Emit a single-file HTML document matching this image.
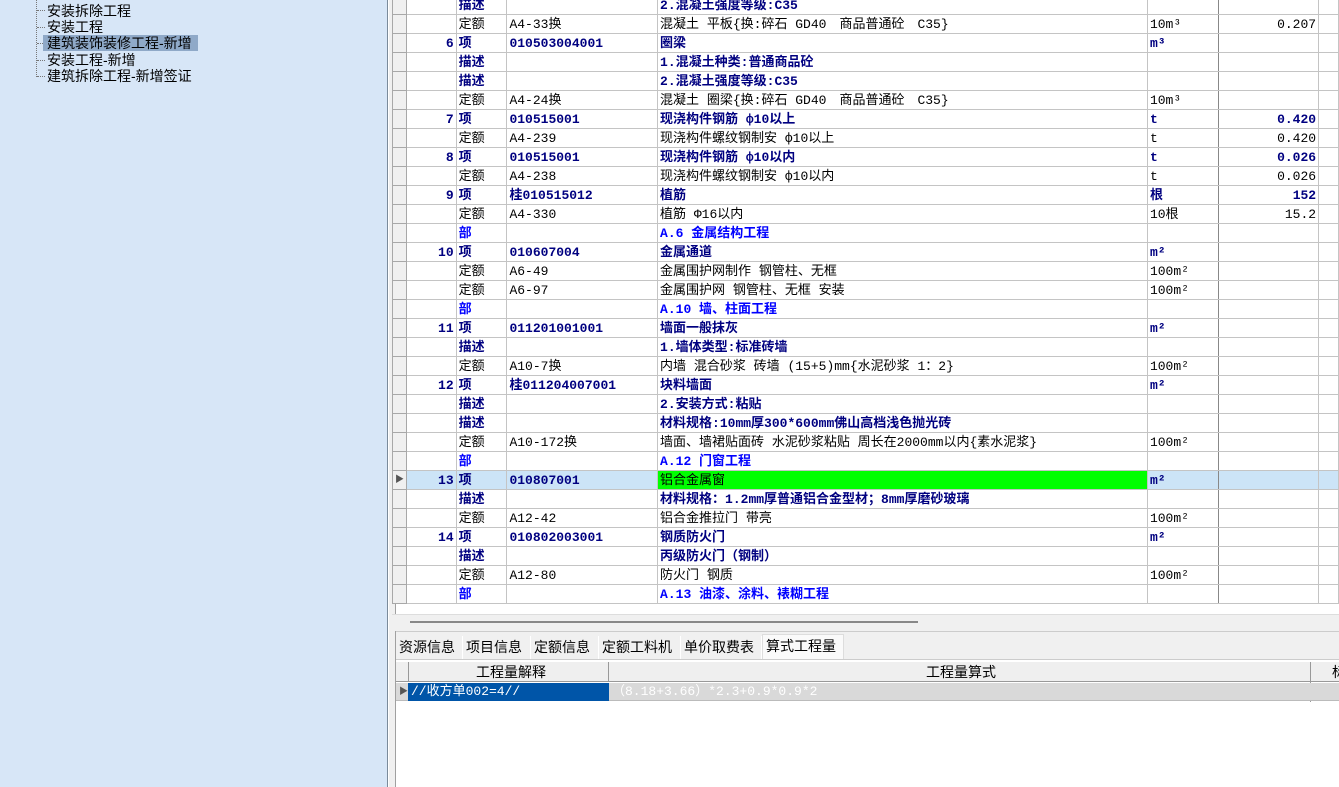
<!DOCTYPE html>
<html><head><meta charset="utf-8"><style>
*{margin:0;padding:0;box-sizing:border-box}
body{width:1339px;height:787px;overflow:hidden;background:#fff;font-family:"Liberation Sans","Noto Sans CJK SC",sans-serif;font-size:13px;position:relative}
#left{position:absolute;left:0;top:0;width:388px;height:787px;background:#d7e6f7;border-right:1px solid #7a8a9a}
.tn{position:absolute;left:47px;font-size:14px;color:#000;line-height:16px;white-space:nowrap}
.dot{position:absolute;border-top:1px dotted #777;width:8px;left:37px}
#sp{position:absolute;left:389px;top:0;width:7px;height:787px;background:#f0f0f0;border-right:1px solid #a0a0a0}
#grid{position:absolute;left:392px;top:-5px;border-collapse:collapse;table-layout:fixed}
#grid td{height:19px;border:1px solid #c4c4c4;padding:0 2px;white-space:nowrap;overflow:hidden;line-height:17px;font-size:13px;font-family:"Liberation Mono","Noto Sans CJK SC",monospace}
#grid td.h{background:#f0f0f0;border-color:#a8a8a8;padding:0}
#grid td.n{text-align:right;font-weight:bold;color:#000080}
#grid td.q{text-align:right}
#grid td.u{border-right:1px solid #888}
.b td{color:#000080;font-weight:bold}
.p td{color:#0000ff;font-weight:bold}
.sel td{background:#cce4f7}
#hsb{position:absolute;left:392px;top:614px;width:947px;height:17px;background:#f0f0f0;border-top:1px solid #ddd}
#tabs{position:absolute;left:396px;top:631px;width:943px;height:28px;background:#f0f0f0;border-top:1px solid #ccc}
.tab{position:absolute;top:4px;height:23px;font-size:14px;line-height:22px;padding-left:3px;background:#f0f0f0;border-right:1px solid #fff}
#bot{position:absolute;left:396px;top:659px;width:943px;height:128px;background:#fff;border-top:1px solid #ccc}
.mono{font-family:"Liberation Mono","Noto Sans CJK SC",monospace}
</style></head><body>
<div id="left">
<div class="dot" style="top:10px"></div><div class="tn" style="top:3px">安装拆除工程</div>
<div class="dot" style="top:27px"></div><div class="tn" style="top:19px">安装工程</div>
<div style="position:absolute;left:43px;top:35px;width:155px;height:16px;background:#8fa9c8"></div>
<div class="dot" style="top:43px;left:37px;width:6px"></div><div class="tn" style="top:35px">建筑装饰装修工程-新增</div>
<div class="dot" style="top:60px"></div><div class="tn" style="top:52px">安装工程-新增</div>
<div class="dot" style="top:76px"></div><div class="tn" style="top:68px">建筑拆除工程-新增签证</div>
<div style="position:absolute;left:36px;top:0;height:77px;border-left:1px dotted #777"></div>
</div>
<div id="sp"></div>
<table id="grid">
<colgroup><col style="width:14px"><col style="width:50px"><col style="width:51px"><col style="width:151px"><col style="width:491px"><col style="width:71px"><col style="width:101px"><col style="width:20px"></colgroup>
<tr class="b"><td class="h"></td><td></td><td>描述</td><td></td><td>2.混凝土强度等级:C35</td><td class="u"></td><td></td><td></td></tr>
<tr><td class="h"></td><td></td><td>定额</td><td>A4-33换</td><td>混凝土 平板{换:碎石 GD40　商品普通砼　C35}</td><td class="u">10m³</td><td class="q">0.207</td><td></td></tr>
<tr class="b"><td class="h"></td><td class="n">6</td><td>项</td><td>010503004001</td><td>圈梁</td><td class="u">m³</td><td></td><td></td></tr>
<tr class="b"><td class="h"></td><td></td><td>描述</td><td></td><td>1.混凝土种类:普通商品砼</td><td class="u"></td><td></td><td></td></tr>
<tr class="b"><td class="h"></td><td></td><td>描述</td><td></td><td>2.混凝土强度等级:C35</td><td class="u"></td><td></td><td></td></tr>
<tr><td class="h"></td><td></td><td>定额</td><td>A4-24换</td><td>混凝土 圈梁{换:碎石 GD40　商品普通砼　C35}</td><td class="u">10m³</td><td class="q"></td><td></td></tr>
<tr class="b"><td class="h"></td><td class="n">7</td><td>项</td><td>010515001</td><td>现浇构件钢筋 ф10以上</td><td class="u">t</td><td class="q">0.420</td><td></td></tr>
<tr><td class="h"></td><td></td><td>定额</td><td>A4-239</td><td>现浇构件螺纹钢制安 ф10以上</td><td class="u">t</td><td class="q">0.420</td><td></td></tr>
<tr class="b"><td class="h"></td><td class="n">8</td><td>项</td><td>010515001</td><td>现浇构件钢筋 ф10以内</td><td class="u">t</td><td class="q">0.026</td><td></td></tr>
<tr><td class="h"></td><td></td><td>定额</td><td>A4-238</td><td>现浇构件螺纹钢制安 ф10以内</td><td class="u">t</td><td class="q">0.026</td><td></td></tr>
<tr class="b"><td class="h"></td><td class="n">9</td><td>项</td><td>桂010515012</td><td>植筋</td><td class="u">根</td><td class="q">152</td><td></td></tr>
<tr><td class="h"></td><td></td><td>定额</td><td>A4-330</td><td>植筋 Φ16以内</td><td class="u">10根</td><td class="q">15.2</td><td></td></tr>
<tr class="p"><td class="h"></td><td></td><td>部</td><td></td><td>A.6 金属结构工程</td><td class="u"></td><td></td><td></td></tr>
<tr class="b"><td class="h"></td><td class="n">10</td><td>项</td><td>010607004</td><td>金属通道</td><td class="u">m²</td><td></td><td></td></tr>
<tr><td class="h"></td><td></td><td>定额</td><td>A6-49</td><td>金属围护网制作 钢管柱、无框</td><td class="u">100m²</td><td></td><td></td></tr>
<tr><td class="h"></td><td></td><td>定额</td><td>A6-97</td><td>金属围护网 钢管柱、无框 安装</td><td class="u">100m²</td><td></td><td></td></tr>
<tr class="p"><td class="h"></td><td></td><td>部</td><td></td><td>A.10 墙、柱面工程</td><td class="u"></td><td></td><td></td></tr>
<tr class="b"><td class="h"></td><td class="n">11</td><td>项</td><td>011201001001</td><td>墙面一般抹灰</td><td class="u">m²</td><td></td><td></td></tr>
<tr class="b"><td class="h"></td><td></td><td>描述</td><td></td><td>1.墙体类型:标准砖墙</td><td class="u"></td><td></td><td></td></tr>
<tr><td class="h"></td><td></td><td>定额</td><td>A10-7换</td><td>内墙 混合砂浆 砖墙 (15+5)mm{水泥砂浆 1：2}</td><td class="u">100m²</td><td></td><td></td></tr>
<tr class="b"><td class="h"></td><td class="n">12</td><td>项</td><td>桂011204007001</td><td>块料墙面</td><td class="u">m²</td><td></td><td></td></tr>
<tr class="b"><td class="h"></td><td></td><td>描述</td><td></td><td>2.安装方式:粘贴</td><td class="u"></td><td></td><td></td></tr>
<tr class="b"><td class="h"></td><td></td><td>描述</td><td></td><td>材料规格:10mm厚300*600mm佛山高档浅色抛光砖</td><td class="u"></td><td></td><td></td></tr>
<tr><td class="h"></td><td></td><td>定额</td><td>A10-172换</td><td>墙面、墙裙贴面砖 水泥砂浆粘贴 周长在2000mm以内{素水泥浆}</td><td class="u">100m²</td><td></td><td></td></tr>
<tr class="p"><td class="h"></td><td></td><td>部</td><td></td><td>A.12 门窗工程</td><td class="u"></td><td></td><td></td></tr>
<tr class="b sel"><td class="h" style="background:#f0f0f0;font-size:9px;color:#555;text-align:center">▶</td><td class="n">13</td><td>项</td><td>010807001</td><td style="background:#00ff00;color:#000;font-weight:normal">铝合金属窗</td><td class="u">m²</td><td></td><td></td></tr>
<tr class="b"><td class="h"></td><td></td><td>描述</td><td></td><td>材料规格：1.2mm厚普通铝合金型材；8mm厚磨砂玻璃</td><td class="u"></td><td></td><td></td></tr>
<tr><td class="h"></td><td></td><td>定额</td><td>A12-42</td><td>铝合金推拉门 带亮</td><td class="u">100m²</td><td></td><td></td></tr>
<tr class="b"><td class="h"></td><td class="n">14</td><td>项</td><td>010802003001</td><td>钢质防火门</td><td class="u">m²</td><td></td><td></td></tr>
<tr class="b"><td class="h"></td><td></td><td>描述</td><td></td><td>丙级防火门（钢制）</td><td class="u"></td><td></td><td></td></tr>
<tr><td class="h"></td><td></td><td>定额</td><td>A12-80</td><td>防火门 钢质</td><td class="u">100m²</td><td></td><td></td></tr>
<tr class="p"><td class="h"></td><td></td><td>部</td><td></td><td>A.13 油漆、涂料、裱糊工程</td><td class="u"></td><td></td><td></td></tr>
</table>
<div id="hsb"><div style="position:absolute;left:18px;top:6px;width:508px;height:2px;background:#888"></div></div>
<div id="tabs">
<div class="tab" style="left:0;width:67px">资源信息</div>
<div class="tab" style="left:67px;width:68px">项目信息</div>
<div class="tab" style="left:135px;width:68px">定额信息</div>
<div class="tab" style="left:203px;width:82px">定额工料机</div>
<div class="tab" style="left:285px;width:81px">单价取费表</div>
<div class="tab" style="left:366px;top:2px;height:26px;width:82px;background:#fafafa;border:1px solid #ddd;border-bottom:none">算式工程量</div>
</div>
<div id="bot">
<div style="position:absolute;left:0;top:2px;width:943px;height:20px;background:#efefef;border-bottom:1px solid #999"></div>
<div style="position:absolute;left:12px;top:2px;width:1px;height:20px;background:#999"></div>
<div style="position:absolute;left:212px;top:2px;width:1px;height:20px;background:#999"></div>
<div style="position:absolute;left:914px;top:2px;width:1px;height:40px;background:#999"></div>
<div style="position:absolute;left:80px;top:3px;font-size:14px;line-height:18px">工程量解释</div>
<div style="position:absolute;left:530px;top:3px;font-size:14px;line-height:18px">工程量算式</div>
<div style="position:absolute;left:936px;top:3px;font-size:14px;line-height:18px">标</div>
<div style="position:absolute;left:0;top:23px;width:943px;height:18px;background:#d9d9d9;border-bottom:1px solid #bbb"></div>
<div style="position:absolute;left:3px;top:24px;font-size:9px;color:#555">▶</div>
<div class="mono" style="position:absolute;left:12px;top:23px;width:201px;height:18px;background:#0055a8;color:#fff;font-size:13px;line-height:18px;padding-left:3px">//收方单002=4//</div>
<div class="mono" style="position:absolute;left:216px;top:23px;color:#fff;font-size:13px;line-height:18px">（8.18+3.66）*2.3+0.9*0.9*2</div>
</div>
</body></html>
